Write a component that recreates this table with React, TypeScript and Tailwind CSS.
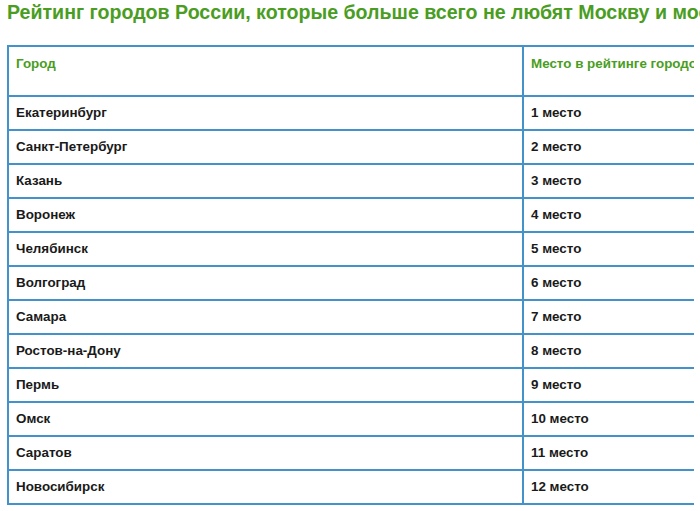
import React from 'react';

const rows = [
  ['Екатеринбург', '1 место'],
  ['Санкт-Петербург', '2 место'],
  ['Казань', '3 место'],
  ['Воронеж', '4 место'],
  ['Челябинск', '5 место'],
  ['Волгоград', '6 место'],
  ['Самара', '7 место'],
  ['Ростов-на-Дону', '8 место'],
  ['Пермь', '9 место'],
  ['Омск', '10 место'],
  ['Саратов', '11 место'],
  ['Новосибирск', '12 место'],
];

export default function App() {
  return (
    <div className="w-[700px] h-[511px] bg-white overflow-hidden font-['Liberation_Sans',Arial,sans-serif]">
      <h1 className="pl-[7px] pt-[1px] text-[19.6px] leading-[22px] font-bold text-[#4a9d22] whitespace-nowrap">
        Рейтинг городов России, которые больше всего не любят Москву и москвичей
      </h1>
      <div className="ml-[7px] mt-[22px] w-[687px] overflow-hidden">
        <table className="w-[900px] border-collapse table-fixed text-[13.4px] font-bold">
          <colgroup>
            <col className="w-[515px]" />
            <col />
          </colgroup>
          <thead>
            <tr className="h-[50px]">
              <th className="border-2 border-[#4392c9] align-top text-left pl-[7px] pt-[7px] text-[#4a9d22]">Город</th>
              <th className="border-2 border-[#4392c9] align-top text-left pl-[7px] pt-[7px] text-[#4a9d22] whitespace-nowrap">
                Место в рейтинге городов, которые не любят Москву
              </th>
            </tr>
          </thead>
          <tbody>
            {rows.map(([city, place]) => (
              <tr key={city} className="h-[34px]">
                <td className="border-2 border-[#4392c9] pl-[7px] text-[#1a1a1a]">{city}</td>
                <td className="border-2 border-[#4392c9] pl-[7px] text-[#1a1a1a]">{place}</td>
              </tr>
            ))}
          </tbody>
        </table>
      </div>
    </div>
  );
}
